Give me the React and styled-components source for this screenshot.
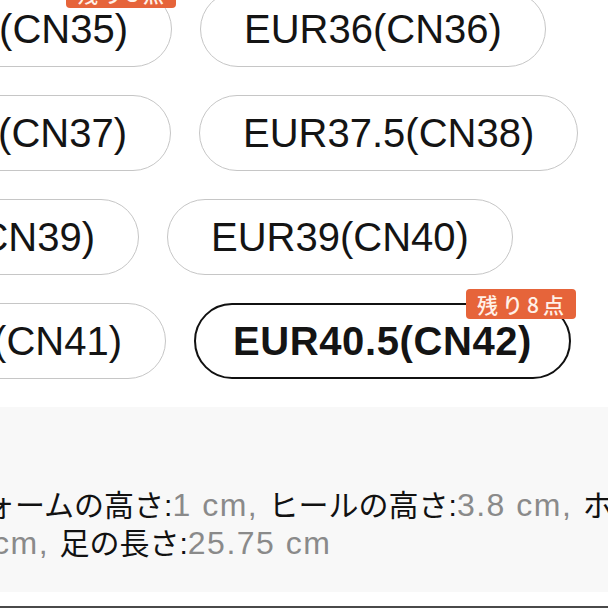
import React from "react";
import styled, { createGlobalStyle } from "styled-components";

const Global = createGlobalStyle`
  html, body { margin: 0; padding: 0; background: #fff; }
  body {
    overflow: hidden;
    font-family: "Liberation Sans", "Noto Sans CJK JP", sans-serif;
    color: #111;
  }
`;

const Page = styled.div`
  width: 608px;
  height: 608px;
  overflow: hidden;
  display: flex;
  flex-direction: column;
`;

const Sizes = styled.div`
  margin-top: -9px;
  display: flex;
  flex-direction: column;
  gap: 28px;
`;

const Row = styled.div`
  display: flex;
  align-items: center;
  gap: 28px;
`;

const Anchor = styled.div`
  width: ${(p) => p.$split}px;
  flex-shrink: 0;
  display: flex;
  justify-content: flex-end;
`;

const Pill = styled.div`
  position: relative;
  flex-shrink: 0;
  box-sizing: border-box;
  height: 76px;
  padding: 0 ${(p) => (p.$selected ? 37 : 43)}px;
  display: flex;
  align-items: center;
  justify-content: center;
  border-radius: 38px;
  border: ${(p) => (p.$selected ? "2.5px solid #111" : "1px solid #c6c6c6")};
  background: #fff;
  font-size: 40px;
  font-weight: ${(p) => (p.$selected ? 700 : 400)};
  letter-spacing: ${(p) => (p.$selected ? "0.6px" : "0")};
  color: #141414;
  white-space: nowrap;
`;

const Badge = styled.span`
  position: absolute;
  top: ${(p) => (p.$selected ? "-16px" : "-14px")};
  right: ${(p) => (p.$selected ? "-7px" : "-5px")};
  height: 30px;
  padding: 0 8px 0 11px;
  display: flex;
  align-items: center;
  border-radius: 4px;
  background: #e6643a;
  color: #fff1e8;
  font-family: "Noto Sans CJK JP", sans-serif;
  font-size: 21px;
  font-weight: 500;
  letter-spacing: 4px;
  line-height: 30px;
`;

const Info = styled.div`
  margin-top: 28px;
  height: 185px;
  flex-shrink: 0;
  box-sizing: border-box;
  padding-top: 79px;
  background: #f8f8f8;
`;

const Line = styled.div`
  margin-left: ${(p) => p.$offset}px;
  height: 38px;
  line-height: 38px;
  white-space: nowrap;
`;

const Label = styled.span`
  font-size: 30px;
  color: #111;
`;

const Value = styled.span`
  font-size: 32px;
  color: #8a8a8a;
  letter-spacing: 1.5px;
`;

const Footer = styled.div`
  margin-top: 14px;
  height: 2px;
  background: #4a4a4a;
`;

const rows = [
  { split: 172, left: { text: "EUR35(CN35)", badge: "残り3点" }, right: { text: "EUR36(CN36)" } },
  { split: 171, left: { text: "EUR37(CN37)" }, right: { text: "EUR37.5(CN38)" } },
  { split: 139, left: { text: "EUR38(CN39)" }, right: { text: "EUR39(CN40)" } },
  { split: 166, left: { text: "EUR40(CN41)" }, right: { text: "EUR40.5(CN42)", badge: "残り8点", selected: true } },
];

function SizePill({ text, badge, selected }) {
  return (
    <Pill $selected={selected}>
      {text}
      {badge && <Badge $selected={selected}>{badge}</Badge>}
    </Pill>
  );
}

export default function App() {
  return (
    <Page>
      <Global />
      <Sizes>
        {rows.map((r, i) => (
          <Row key={i}>
            <Anchor $split={r.split}>
              <SizePill {...r.left} />
            </Anchor>
            <SizePill {...r.right} />
          </Row>
        ))}
      </Sizes>
      <Info>
        <Line $offset={-165}>
          <Label>プラットフォームの高さ:</Label>
          <Value>1 cm, </Value>
          <Label>ヒールの高さ:</Label>
          <Value>3.8 cm, </Value>
          <Label>ホールド幅:</Label>
          <Value>9 cm</Value>
        </Line>
        <Line $offset={-7}>
          <Value>cm, </Value>
          <Label>足の長さ:</Label>
          <Value>25.75 cm</Value>
        </Line>
      </Info>
      <Footer />
    </Page>
  );
}
